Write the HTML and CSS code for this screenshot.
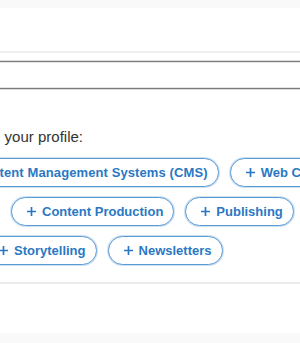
FILE: index.html
```html
<!DOCTYPE html>
<html lang="en">
<head>
  <meta charset="UTF-8">
  <title>Add skills</title>
  <meta name="viewport" content="width=device-width, initial-scale=1.0">
  <link rel="stylesheet" href="styles.css">
</head>
<body>

  <div class="card">
    <div class="card-top"></div>

    <div class="field-wrap">
      <input type="text" class="skill-input" aria-label="Skill">
    </div>

    <p class="hint">Suggestions based on your profile:</p>

    <div class="chips">
      <div class="chip-row row-one">
        <button class="skill-chip"><svg viewBox="0 0 11 11"><path d="M5.5 1v9M1 5.5h9"/></svg>Content Management Systems (CMS)</button>
        <button class="skill-chip"><svg viewBox="0 0 11 11"><path d="M5.5 1v9M1 5.5h9"/></svg>Web Content Writing</button>
      </div>
      <div class="chip-row row-two">
        <button class="skill-chip"><svg viewBox="0 0 11 11"><path d="M5.5 1v9M1 5.5h9"/></svg>Content Production</button>
        <button class="skill-chip"><svg viewBox="0 0 11 11"><path d="M5.5 1v9M1 5.5h9"/></svg>Publishing</button>
      </div>
      <div class="chip-row row-three">
        <button class="skill-chip"><svg viewBox="0 0 11 11"><path d="M5.5 1v9M1 5.5h9"/></svg>Storytelling</button>
        <button class="skill-chip"><svg viewBox="0 0 11 11"><path d="M5.5 1v9M1 5.5h9"/></svg>Newsletters</button>
      </div>
    </div>

    <div class="card-foot"></div>
  </div>

</body>
</html>
```

FILE: styles.css
```css
* {
  box-sizing: border-box;
}

html, body {
  overflow: hidden;
}

body {
  font-family: "Liberation Sans", Arial, sans-serif;
  margin: 0;
  padding: 8px 0;
  background: #f9f9f9;
  color: #333;
}

.card {
  background: #fff;
}

.card-top {
  height: 45px;
  border-bottom: 2px solid #efefef;
}

.field-wrap {
  padding-top: 8px;
  margin: 0 -10px;
}

.skill-input {
  display: block;
  width: 100%;
  height: 28px;
  margin: 0;
  border: 1px solid #7c7c7c;
  border-radius: 4px;
  box-shadow: 0 0 0 1px #dcdcdc, inset 0 0 0 1px #e4e4e4;
  background: #fff;
  outline: none;
}

.hint {
  margin: 38px 0 0 -148px;
  font-size: 15px;
  line-height: 20px;
  white-space: nowrap;
  color: #333;
}

.chips {
  display: flex;
  flex-direction: column;
  gap: 10px;
  margin-top: 11px;
  padding-bottom: 17px;
  border-bottom: 2px solid #ececec;
}

.chip-row {
  display: flex;
  gap: 11px;
  white-space: nowrap;
}

.row-one {
  margin-left: -57px;
}

.row-two {
  margin-left: 11px;
}

.row-three {
  margin-left: -17px;
}

.skill-chip {
  flex-shrink: 0;
  display: inline-flex;
  align-items: center;
  gap: 5px;
  height: 29px;
  padding: 0 10px 0 14px;
  border: 1px solid #5b9ad5;
  border-radius: 15px;
  box-shadow: 0 0 0 1px rgba(91, 154, 213, 0.3);
  background: #fff;
  color: #2a78c4;
  font-family: inherit;
  font-size: 13px;
  font-weight: bold;
  cursor: pointer;
}

.row-one .skill-chip:first-child {
  letter-spacing: 0.1px;
}

.skill-chip svg {
  width: 11px;
  height: 11px;
  fill: none;
  stroke: currentColor;
  stroke-width: 1.7;
}

.card-foot {
  height: 49px;
}
```
